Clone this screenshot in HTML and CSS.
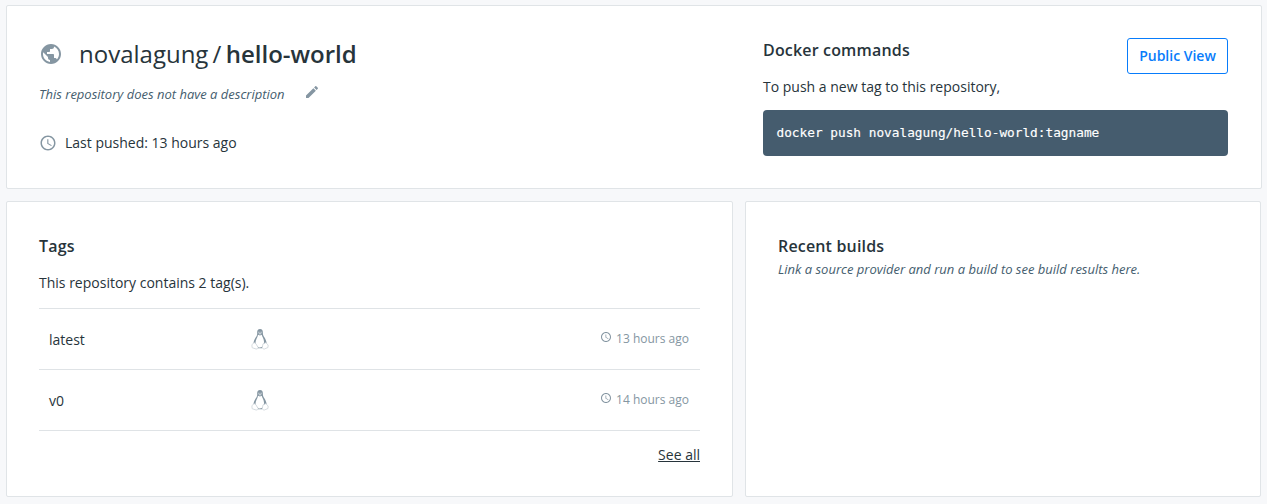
FILE: index.html
```html
<!DOCTYPE html>
<html lang="en">
<head>
<meta charset="utf-8">
<title>novalagung/hello-world</title>
<link rel="stylesheet" href="styles.css">
</head>
<body>
<svg class="sprite" aria-hidden="true">
  <symbol id="clock" viewBox="0 0 24 24"><path d="M11.99 2C6.47 2 2 6.48 2 12s4.47 10 9.99 10C17.52 22 22 17.52 22 12S17.52 2 11.99 2zM12 20c-4.42 0-8-3.58-8-8s3.58-8 8-8 8 3.58 8 8-3.58 8-8 8zm.5-13H11v6l5.25 3.15.75-1.23-4.500-2.670z"/></symbol>
  <symbol id="penguin" viewBox="0 0 18 22">
    <path class="tux-body" d="M9 1C6.700 1 6 2.600 6.200 5c.1 2-.4 2.800-1.400 4.300-1.200 1.900-2 3.700-2.300 5.700l2.300 1.500L7 20.200h4l2.300-3.700 2.300-1.500c-.3-2.500-1.300-4.500-2.400-6-1-1.500-1.300-2.300-1.300-4C11.900 2.500 11.200 1 9 1z"/>
    <path class="tux-belly" d="M7 6.700 9 7.500l1.700-.8c.4 2 2.200 4 2.300 6.800.1 3.200-1.500 6-4 6s-4.300-2.500-4.500-5C4.600 11.500 6.700 9.500 7 6.700z"/>
    <path class="tux-face" d="M7.300 3.700h1.200v1H7.300zM9.500 3.700h1.200v1H9.500zM7.300 5.300h3.400L9 6.700z"/>
    <path class="tux-foot" d="M3.200 14.700.9 16.600l.2 3.100 4 1.300c1.500.1 2.100-.7 2-1.700L4.700 15.500zM14.800 14.700l2.300 2.200-.1 2.600-3.600 1.500c-1.500 0-2.200-.7-2.100-1.700l.7-3.400z"/>
  </symbol>
</svg>
<main class="page">
  <header class="card summary">
    <section class="repo">
      <h1 class="repo-title">
        <svg class="globe" viewBox="0 0 24 24"><path d="M12 2C6.480 2 2 6.480 2 12s4.480 10 10 10 10-4.480 10-10S17.520 2 12 2zm-1 17.930c-3.950-.490-7-3.850-7-7.930 0-.620.080-1.210.210-1.790L9 15v1c0 1.100.9 2 2 2v1.930zm6.900-2.540c-.260-.810-1-1.390-1.900-1.390h-1v-3c0-.550-.450-1-1-1H8v-2h2c.550 0 1-.450 1-1V7h2c1.100 0 2-.9 2-2v-.410c2.930 1.190 5 4.060 5 7.410 0 2.080-.8 3.970-2.100 5.390z"/></svg>
        <span class="owner">novalagung</span><span class="slash">/</span><span class="name">hello-world</span>
      </h1>
      <div class="description">
        <em class="note">This repository does not have a description</em>
        <svg class="pencil" viewBox="0 0 24 24"><path d="M3 17.250V21h3.750L17.810 9.940l-3.750-3.750L3 17.250zM20.710 7.040c.390-.390.390-1.020 0-1.410l-2.340-2.340c-.390-.390-1.020-.390-1.410 0l-1.830 1.830 3.750 3.750 1.830-1.830z"/></svg>
      </div>
      <div class="pushed"><svg class="clock"><use href="#clock"/></svg><span class="pushed-text">Last pushed: 13 hours ago</span></div>
    </section>
    <section class="commands">
      <div class="commands-head">
        <div>
          <h2 class="heading">Docker commands</h2>
          <p class="text commands-text">To push a new tag to this repository,</p>
        </div>
        <button class="public-view">Public View</button>
      </div>
      <pre class="code"><code class="code-text">docker push novalagung/hello-world:tagname</code></pre>
    </section>
  </header>
  <div class="columns">
    <section class="card tags">
      <h2 class="heading">Tags</h2>
      <p class="text tags-text">This repository contains 2 tag(s).</p>
      <ul class="tag-list">
        <li class="tag-row"><span class="tag-name">latest</span><svg class="penguin"><use href="#penguin"/></svg><span class="age"><svg class="clock-small"><use href="#clock"/></svg><span class="age-text">13 hours ago</span></span></li>
        <li class="tag-row"><span class="tag-name">v0</span><svg class="penguin"><use href="#penguin"/></svg><span class="age"><svg class="clock-small"><use href="#clock"/></svg><span class="age-text">14 hours ago</span></span></li>
      </ul>
      <a class="see-all" href="#">See all</a>
    </section>
    <section class="card builds">
      <h2 class="heading">Recent builds</h2>
      <em class="note builds-note">Link a source provider and run a build to see build results here.</em>
    </section>
  </div>
</main>
</body>
</html>
```
FILE: styles.css
```css
* { box-sizing: border-box; }
body { margin: 0; background: #f7f8fa; color: #27343b; font: 14px/20px "Open Sans", sans-serif; }
h1, h2, p, ul, pre { margin: 0; padding: 0; }
svg { display: block; flex: none; fill: #8596a2; }
.sprite { display: none; }
.page { height: 504px; padding: 5px 5px 7px 6px; display: flex; flex-direction: column; gap: 12px; }
.card { background: #fff; border: 1px solid #e0e4e7; border-radius: 2px; }
.summary { height: 184px; padding: 32px 33px 0 32px; display: flex; justify-content: space-between; }
.repo-title { display: flex; align-items: center; height: 32px; font-size: 24px; line-height: 32px; font-weight: 400; }
.globe { width: 24px; height: 24px; margin-right: 16px; }
.slash { margin: 0 4.500px 0 4px; }
.name { font-weight: 600; }
.description { display: flex; align-items: center; gap: 19px; height: 20px; margin-top: 14px; }
.note { color: #445d6e; font-size: 13px; }
.pencil { width: 16px; height: 16px; margin-bottom: 4px; }
.pushed { display: flex; align-items: center; gap: 8px; margin-top: 29px; }
.clock { width: 18px; height: 18px; }
.commands { width: 465px; }
.commands-head { display: flex; justify-content: space-between; height: 72px; }
.heading { font-size: 16px; line-height: 24px; font-weight: 600; letter-spacing: .17px; }
.commands-text { margin-top: 15px; }
.public-view { width: 101px; height: 36px; padding: 0; border: 1px solid #087cfb; border-radius: 3px; background: #fff; color: #087cfb; font: 600 14px/20px "Open Sans", sans-serif; }
.code { height: 46px; padding: 13px 13.500px; border-radius: 4px; background: #455c6e; color: #fff; }
.code-text { display: block; font: 12.780px/20px "DejaVu Sans Mono", monospace; -webkit-text-stroke: .15px #fff; }
.columns { height: 296px; display: flex; gap: 12px; }
.tags { width: 727px; padding: 32px; }
.builds { width: 516px; padding: 32px; }
.tags-text { margin-top: 15px; }
.tag-list { margin-top: 15px; border-top: 1px solid #dfe3e6; list-style: none; }
.tag-row { display: flex; align-items: center; height: 61px; padding: 0 11px 0 10px; border-bottom: 1px solid #dfe3e6; }
.tag-name { width: 202px; padding-top: 1px; }
.penguin { width: 18px; height: 22px; }
.tux-body { fill: #8596a2; }
.tux-belly { fill: #fff; }
.tux-face { fill: #dce2e6; }
.tux-foot { fill: #fff; stroke: #cbd3d8; stroke-width: .8; }
.age { display: flex; align-items: center; gap: 4px; margin-left: auto; color: #8596a2; font-size: 12px; }
.clock-small { width: 12px; height: 12px; margin-bottom: 4px; }
.see-all { display: block; width: max-content; margin: 14px 0 0 auto; color: inherit; text-decoration: underline; }
.builds-note { display: block; line-height: 20px; margin-top: 1px; }
```
